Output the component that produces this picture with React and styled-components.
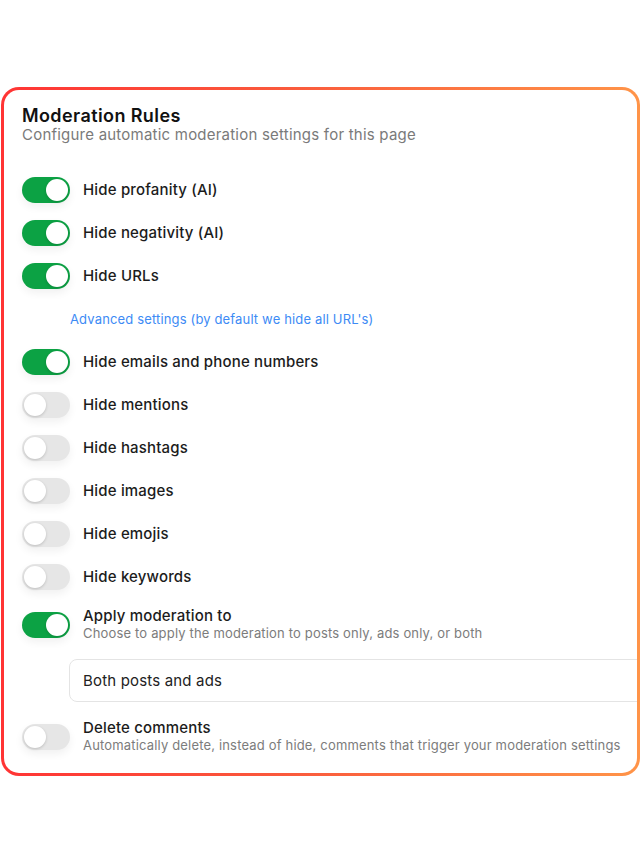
import React from "react";
import styled, { createGlobalStyle } from "styled-components";

const Global = createGlobalStyle`
  html, body { margin: 0; padding: 0; background: #ffffff; }
  body { font-family: Inter, "Noto Sans", Arial, sans-serif; -webkit-font-smoothing: antialiased; }
`;

const Page = styled.div`
  padding: 87px 1px 0 1px;
  width: 641px;
  box-sizing: border-box;
`;

const Card = styled.section`
  box-sizing: border-box;
  border: 3px solid transparent;
  border-radius: 18px;
  background:
    linear-gradient(#ffffff, #ffffff) padding-box,
    linear-gradient(90deg, #ff3434 0%, #fa5a3c 45%, #ff9448 100%) border-box;
  padding: 16px 0 19px 18px;
  overflow: hidden;
`;

const Header = styled.header`
  display: flex;
  flex-direction: column;
  margin-bottom: 33px;
`;

const Title = styled.h2`
  margin: 0;
  font-size: 18px;
  line-height: 20px;
  font-weight: 600;
  letter-spacing: 0.4px;
  color: #111111;
`;

const Subtitle = styled.p`
  margin: 0;
  font-size: 15px;
  line-height: 18px;
  letter-spacing: 0.22px;
  color: #7a7a7a;
`;

const List = styled.div`
  display: flex;
  flex-direction: column;
  gap: 17px;
`;

const Row = styled.div`
  display: flex;
  align-items: center;
  gap: 13px;
  min-height: 26px;
`;

const Track = styled.span`
  flex: none;
  position: relative;
  width: 48px;
  height: 26px;
  border-radius: 13px;
  background: ${(p) => (p.$on ? "#0ca244" : "#e6e6e6")};
  box-shadow: 0 4px 8px rgba(0, 0, 0, 0.06);
`;

const Knob = styled.span`
  position: absolute;
  top: 2px;
  left: ${(p) => (p.$on ? "24px" : "2px")};
  width: 22px;
  height: 22px;
  border-radius: 50%;
  background: #ffffff;
  box-shadow: 0 1px 3px rgba(0, 0, 0, 0.18);
`;

const Texts = styled.div`
  display: flex;
  flex-direction: column;
`;

const Label = styled.span`
  font-size: 15px;
  line-height: 18px;
  font-weight: 500;
  letter-spacing: 0.17px;
  color: #1c1c1c;
`;

const Desc = styled.span`
  font-size: 13px;
  line-height: 17px;
  letter-spacing: 0.17px;
  color: #7c7c7c;
`;

const LinkRow = styled.div`
  display: flex;
  align-items: center;
  height: 26px;
  padding-left: 48px;
`;

const Link = styled.a`
  font-size: 13px;
  color: #3d8bf5;
  text-decoration: none;
  letter-spacing: 0.15px;
`;

const SelectRow = styled.div`
  padding-left: 47px;
  margin-right: -30px;
`;

const Select = styled.div`
  display: flex;
  align-items: center;
  height: 43px;
  box-sizing: border-box;
  border: 1px solid #e4e4e4;
  border-radius: 8px;
  padding-left: 13px;
  font-size: 15px;
  letter-spacing: 0.17px;
  color: #222222;
`;

const Toggle = ({ on }) => (
  <Track $on={on}>
    <Knob $on={on} />
  </Track>
);

const simple = [
  ["Hide profanity (AI)", true],
  ["Hide negativity (AI)", true],
  ["Hide URLs", true],
];
const simple2 = [
  ["Hide emails and phone numbers", true],
  ["Hide mentions", false],
  ["Hide hashtags", false],
  ["Hide images", false],
  ["Hide emojis", false],
  ["Hide keywords", false],
];

export default function App() {
  return (
    <Page>
      <Global />
      <Card>
        <Header>
          <Title>Moderation Rules</Title>
          <Subtitle>Configure automatic moderation settings for this page</Subtitle>
        </Header>
        <List>
          {simple.map(([t, on]) => (
            <Row key={t}>
              <Toggle on={on} />
              <Label>{t}</Label>
            </Row>
          ))}
          <LinkRow>
            <Link href="#">Advanced settings (by default we hide all URL's)</Link>
          </LinkRow>
          {simple2.map(([t, on]) => (
            <Row key={t}>
              <Toggle on={on} />
              <Label>{t}</Label>
            </Row>
          ))}
          <Row>
            <Toggle on />
            <Texts>
              <Label>Apply moderation to</Label>
              <Desc>Choose to apply the moderation to posts only, ads only, or both</Desc>
            </Texts>
          </Row>
          <SelectRow>
            <Select>Both posts and ads</Select>
          </SelectRow>
          <Row>
            <Toggle on={false} />
            <Texts>
              <Label>Delete comments</Label>
              <Desc>Automatically delete, instead of hide, comments that trigger your moderation settings</Desc>
            </Texts>
          </Row>
        </List>
      </Card>
    </Page>
  );
}
